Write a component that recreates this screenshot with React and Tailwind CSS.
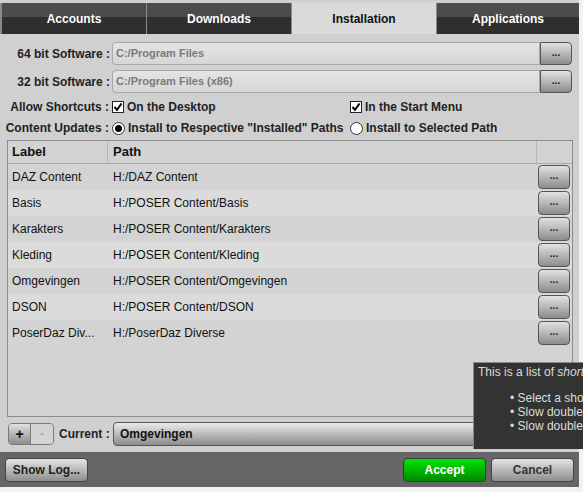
import React from 'react';

const rows = [
  { label: 'DAZ Content', path: 'H:/DAZ Content' },
  { label: 'Basis', path: 'H:/POSER Content/Basis' },
  { label: 'Karakters', path: 'H:/POSER Content/Karakters' },
  { label: 'Kleding', path: 'H:/POSER Content/Kleding' },
  { label: 'Omgevingen', path: 'H:/POSER Content/Omgevingen' },
  { label: 'DSON', path: 'H:/POSER Content/DSON' },
  { label: 'PoserDaz Div...', path: 'H:/PoserDaz Diverse' },
];

const tabs = ['Accounts', 'Downloads', 'Installation', 'Applications'];

const Dots = ({ className }) => (
  <button
    className={
      'flex items-center justify-center bg-[linear-gradient(#e2e2e2,#8c8c8c)] border border-[#555] text-[#222] text-[10px] font-bold leading-none pb-[2px] ' +
      className
    }
  >
    ...
  </button>
);

const Check = () => (
  <span className="w-[12px] h-[12px] bg-white border border-[#222] flex items-center justify-center">
    <svg width="10" height="10" viewBox="0 0 10 10">
      <path d="M1.5 5 L4 7.8 L8.5 1.5" fill="none" stroke="#000" strokeWidth="2" />
    </svg>
  </span>
);

const Radio = ({ on }) => (
  <span className="w-[13px] h-[13px] rounded-full bg-white border border-[#333] flex items-center justify-center">
    {on && <span className="w-[7px] h-[7px] rounded-full bg-black" />}
  </span>
);

const PathField = ({ label, value }) => (
  <div className="flex items-center h-[23px]">
    <span className="w-[112px] pr-[2px] text-right font-bold text-[12px] text-[#222]">{label}</span>
    <div className="flex-1 h-full flex items-center rounded-l-[4px] border border-[#a8a8a8] bg-[linear-gradient(#e4e4e4,#d6d6d6)] px-[3px] text-[11px] font-bold text-[#7a7a7a]">
      {value}
    </div>
    <Dots className="w-[32px] h-full rounded-r-[4px]" />
  </div>
);

export default function App() {
  return (
    <div className="w-[583px] h-[492px] bg-[#f2f2f2] overflow-hidden relative font-['Liberation_Sans',Arial,sans-serif]">
      <div className="w-[579px] h-[487px] bg-[#d0d0d0] flex flex-col pt-[3px]">
        {/* tabs */}
        <div className="flex h-[31px] border-l-2 border-[#8a8a8a]">
          {tabs.map((t, i) => (
            <div
              key={t}
              className={
                (i === 3 ? 'flex-1 ' : 'w-[145px] border-r border-[#8a8a8a] ') +
                (t === 'Installation'
                  ? 'bg-[#dadada] text-[#111] '
                  : 'bg-[linear-gradient(#4c4c4c_45%,#2f2f2f_45%)] text-white ') +
                'flex items-center justify-center font-bold text-[12px]'
              }
            >
              {t}
            </div>
          ))}
        </div>

        {/* form */}
        <div className="flex flex-col gap-[5px] pt-[8px] pr-[7px]">
          <PathField label="64 bit Software :" value="C:/Program Files" />
          <PathField label="32 bit Software :" value="C:/Program Files (x86)" />
        </div>
        <div className="flex items-center h-[20px] mt-[4px] text-[12px] font-bold text-[#222]">
          <span className="w-[112px] pr-[3px] text-right">Allow Shortcuts :</span>
          <div className="w-[238px] flex items-center gap-[3px]">
            <Check />
            <span>On the Desktop</span>
          </div>
          <div className="flex items-center gap-[3px]">
            <Check />
            <span>In the Start Menu</span>
          </div>
        </div>
        <div className="flex items-center h-[22px] text-[12px] font-bold text-[#222]">
          <span className="w-[112px] pr-[3px] text-right">Content Updates :</span>
          <div className="w-[238px] flex items-center gap-[3px]">
            <Radio on />
            <span>Install to Respective "Installed" Paths</span>
          </div>
          <div className="flex items-center gap-[3px]">
            <Radio />
            <span>Install to Selected Path</span>
          </div>
        </div>

        {/* table */}
        <div className="ml-[7px] w-[566px] h-[277px] mt-[1px] border border-[#8c8c8c] bg-[#d3d3d3] flex flex-col">
          <div className="flex h-[23px] border-b border-[#a9a9a9] text-[13px] font-bold text-[#111]">
            <div className="w-[100px] pl-[4px] flex items-center border-r border-[#b5b5b5]">Label</div>
            <div className="w-[429px] pl-[5px] flex items-center border-r border-[#b5b5b5]">Path</div>
            <div className="flex-1" />
          </div>
          {rows.map((r, i) => (
            <div
              key={r.label}
              className={
                'flex items-center h-[26px] text-[12px] text-[#111] ' +
                (i % 2 === 0 ? 'bg-[#d3d3d3]' : 'bg-[#dbdbdb]')
              }
            >
              <div className="w-[100px] pl-[4px] whitespace-nowrap">{r.label}</div>
              <div className="w-[430px] pl-[5px]">{r.path}</div>
              <Dots className="w-[32px] h-[24px] rounded-[4px]" />
            </div>
          ))}
          <div className="flex-1" />
        </div>

        {/* current */}
        <div className="flex items-center h-[24px] mt-[5px] pl-[8px] pr-[4px]">
          <div className="flex h-[22px] rounded-[4px] border border-[#7a7a7a] overflow-hidden">
            <button className="w-[22px] bg-[linear-gradient(#e0e0e0,#8c8c8c)] border-r border-[#7a7a7a] font-bold text-[14px] text-[#111] leading-none">
              +
            </button>
            <button className="w-[22px] bg-[#d4d4d4] text-[#aaa] text-[12px] font-bold leading-none">-</button>
          </div>
          <span className="ml-[5px] w-[54px] font-bold text-[12px] text-[#222]">Current :</span>
          <div className="flex-1 h-[24px] flex items-center px-[6px] rounded-[4px] border border-[#555] bg-[linear-gradient(#eaeaea,#8c8c8c)] font-bold text-[12px] text-[#111]">
            Omgevingen
          </div>
        </div>

        {/* bottom bar */}
        <div className="mt-auto h-[35px] bg-[#666] flex items-center px-[5px]">
          <button className="w-[83px] h-[24px] rounded-[4px] border border-[#444] bg-[linear-gradient(#e4e4e4,#8e8e8e)] font-bold text-[12px] text-[#222]">
            Show Log...
          </button>
          <div className="flex-1" />
          <button className="w-[83px] h-[24px] rounded-[4px] border border-[#3a3a3a] bg-[linear-gradient(#00e400,#008a00)] font-bold text-[12px] text-white">
            Accept
          </button>
          <button className="ml-[5px] w-[83px] h-[24px] rounded-[4px] border border-[#444] bg-[linear-gradient(#e4e4e4,#8e8e8e)] font-bold text-[12px] text-[#333]">
            Cancel
          </button>
        </div>
      </div>

      {/* tooltip, runs past the window edge as in the reference */}
      <div className="absolute left-[473px] top-[362px] w-[260px] h-[87px] bg-[#333] border-l border-t border-[#8a8a8a] text-[#ddd] text-[12px] leading-[14px] pt-[2px] pl-[4px] whitespace-nowrap">
        <div>
          This is a list of <i>shortcuts</i> to content directories.
        </div>
        <div className="h-[12px]" />
        <ul className="pl-[32px]">
          <li>• Select a shortcut to make it current</li>
          <li>• Slow double click the label to rename</li>
          <li>• Slow double click the path to change</li>
        </ul>
      </div>
    </div>
  );
}
